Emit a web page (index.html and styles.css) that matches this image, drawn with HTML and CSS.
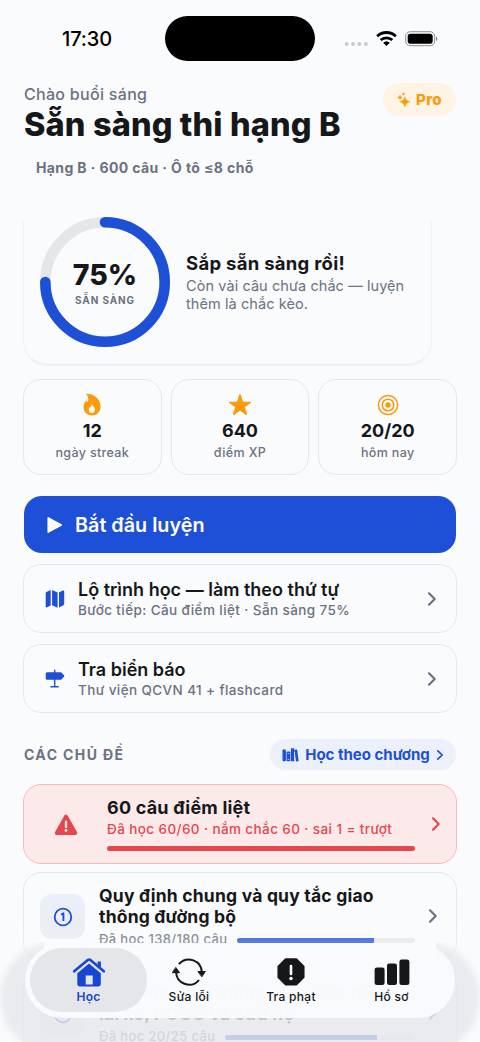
FILE: index.html
```html
<!DOCTYPE html>
<html lang="vi">
<head>
<meta charset="utf-8">
<meta name="viewport" content="width=device-width, initial-scale=1">
<title>Sẵn sàng thi hạng B</title>
<link rel="stylesheet" href="styles.css">
</head>
<body>
<div class="phone">
  <div class="status">
    <span class="time">17:30</span>
    <span class="island"></span>
    <span class="signals">
      <svg width="96" height="20" viewBox="0 0 96 20">
        <g fill="#c9cacd"><circle cx="2.700" cy="15" r="2"/><circle cx="9" cy="15" r="2"/><circle cx="15.400" cy="15" r="2"/><circle cx="21.800" cy="15" r="2"/></g>
        <g fill="none" stroke="#000" stroke-width="2.8"><path d="M33.2 7.2a13.5 13.5 0 0 1 18.6 0"/><path d="M36.7 11.1a8.4 8.4 0 0 1 11.6 0"/></g>
        <path d="M39.2 13.7a4.9 4.9 0 0 1 6.6 0L42.5 17z"/>
        <rect x="61.7" y="2.7" width="29" height="14" rx="4.6" fill="none" stroke="#8d8e90"/>
        <rect x="63.7" y="4.7" width="25" height="10" rx="2.8"/>
        <path d="M92 7.5q3 2.2 0 4.6z" fill="#8d8e90"/>
      </svg>
    </span>
  </div>

  <header class="header">
    <div>
      <div class="greeting">Chào buổi sáng</div>
      <h1 class="title">Sẵn sàng thi hạng B</h1>
    </div>
    <span class="pro">
      <svg width="14" height="16" viewBox="0 0 14 16" fill="#f99b0b"><path d="M7.8 4.6Q8.5 9 13.2 9.8 8.5 10.6 7.8 15.3 7.1 10.6 2.6 9.8 7.1 9 7.8 4.6z" stroke="#f99b0b" stroke-width=".3"/><path d="M3 3.1Q3.3 5.1 5.3 5.4 3.3 5.8 3 7.8 2.6 5.8.5 5.4 2.6 5.1 3 3.1z" stroke="#f99b0b" stroke-width=".3"/><path d="M6.4.4q.2 1.4 1.6 1.6-1.4.2-1.6 1.6Q6.200 2.200 4.800 2 6.200 1.800 6.400.4z" stroke="#f99b0b" stroke-width=".3"/></svg>
      <span>Pro</span>
    </span>
  </header>
  <div class="license">Hạng B · 600 câu · Ô tô ≤8 chỗ</div>

  <section class="hero">
    <div class="ring">
      <svg class="ring-art" width="132" height="132" viewBox="0 0 132 132" fill="none" stroke-width="10.6">
        <circle cx="66" cy="66" r="59.7" stroke="#e5e6ea"/>
        <path d="M66 6.300A59.700 59.700 0 1 1 6.300 66" stroke="#1d4fd7" stroke-linecap="round"/>
      </svg>
      <div class="ring-label"><b class="percent">75%</b><span class="ready">SẴN SÀNG</span></div>
    </div>
    <div class="hero-copy">
      <h2 class="hero-title">Sắp sẵn sàng rồi!</h2>
      <p class="hero-text">Còn vài câu chưa chắc — luyện<br>thêm là chắc kèo.</p>
    </div>
  </section>

  <section class="stats">
    <div class="stat">
      <svg width="24" height="24" viewBox="0 0 24 24"><path d="M6 .8C14 .3 20.600 6.200 20.600 13.600c0 5.200-3.200 8.800-8.500 8.800-5 0-8.500-3.400-8.500-8.200 0-3 1.300-5 2.500-6.700l1.700 1.700C8.900 6.400 8.400 3.300 6 .8z" fill="#f99b0b"/><path d="M11.200 10.300c.5 2 3.700 3.500 3.700 6.500 0 1.900-1.200 3.100-3 3.100-1.900 0-3.100-1.200-3.100-3 0-1.500.6-2.400 1.200-3.200l.8.900c.6-1.200.9-2.600.4-4.300z" fill="#fafbfd"/></svg>
      <b class="stat-value">12</b><span class="stat-name">ngày streak</span>
    </div>
    <div class="stat">
      <svg width="24" height="24" viewBox="0 0 24 24"><path d="M12 1.800l2.600 7.300 7.800.2-6.200 4.700 2.200 7.400L12 17l-6.400 4.400L7.800 14 1.600 9.300l7.800-.2z" fill="#f99b0b" stroke="#f99b0b" stroke-width="1.300" stroke-linejoin="round"/></svg>
      <b class="stat-value">640</b><span class="stat-name">điểm XP</span>
    </div>
    <div class="stat">
      <svg width="24" height="24" viewBox="0 0 24 24" fill="none" stroke="#f99b0b" stroke-width="1.500"><circle cx="12" cy="12" r="9.600"/><circle cx="12" cy="12" r="5.800"/><circle cx="12" cy="12" r="2.700" fill="#f99b0b" stroke="none"/></svg>
      <b class="stat-value">20/20</b><span class="stat-name">hôm nay</span>
    </div>
  </section>

  <button class="cta">
    <svg width="16" height="18" viewBox="0 0 16 18"><path d="M1.200 1.800v14.400L14.300 9z" fill="#fff" stroke="#fff" stroke-width="1.500" stroke-linejoin="round"/></svg>
    <span>Bắt đầu luyện</span>
  </button>

  <div class="link-card">
    <svg width="20" height="20" viewBox="0 0 20 20" fill="#1d4fd7"><path d="M.7 4.200Q.7 3.400 1.400 3L5.700.9v15.500L2 18.300q-1.300.6-1.300-.7zM7.100.9l5.500 2.600v15.200l-5.500-2.500zM14 3.500 17.700 1.600q1.500-.6 1.500.8v12.700q0 .8-.8 1.200L14 18.500z"/></svg>
    <div class="link-copy"><h3 class="link-title">Lộ trình học — làm theo thứ tự</h3><p class="link-text">Bước tiếp: Câu điểm liệt · Sẵn sàng 75%</p></div>
    <svg class="chevron" width="10" height="16" viewBox="0 0 10 16"><path d="M2 2.300 7.700 8 2 13.700"/></svg>
  </div>
  <div class="link-card">
    <svg width="20" height="20" viewBox="0 0 20 20" fill="#1d4fd7"><path d="M9 1.200q0-.8.7-.8t.7.800v2.100h5q.8 0 1.300.5l2.300 2.500q.6.700 0 1.400l-2.300 2.500q-.5.500-1.300.5h-5v6.400h2.700q.8 0 .8.700t-.8.700H6q-.8 0-.8-.7t.8-.7h3v-6.400H2.200q-1.500 0-1.500-1.500V4.800q0-1.500 1.500-1.500H9z"/></svg>
    <div class="link-copy"><h3 class="link-title">Tra biển báo</h3><p class="link-text">Thư viện QCVN 41 + flashcard</p></div>
    <svg class="chevron" width="10" height="16" viewBox="0 0 10 16"><path d="M2 2.300 7.700 8 2 13.700"/></svg>
  </div>

  <div class="topics-head">
    <h2 class="topics-title">CÁC CHỦ ĐỀ</h2>
    <span class="chapters">
      <svg width="17" height="14" viewBox="0 0 17 14"><rect x=".5" y="1.500" width="3.400" height="11.800" rx=".7" fill="#1d4fd7"/><rect x="4.500" y="3.500" width="3.800" height="9.800" rx=".7" fill="#1d4fd7"/><path d="M8.900.8q0-.6.6-.6h2.200q.6 0 .6.600v12.500H8.900z" fill="#1d4fd7"/><path d="m12.300 2 2.200-.4q.6-.1.700.5l1.400 10.400q.1.600-.5.700l-2.100.2z" fill="#1d4fd7"/><path d="M5.600 5.500h1.600M5.600 11.400h1.600M12.600 4v8" stroke="#ebf0fb" stroke-width=".7"/></svg>
      <span>Học theo chương</span>
      <svg width="8" height="12" viewBox="0 0 8 12"><path d="M1.800 1.800 6.200 6l-4.400 4.200" fill="none" stroke="#1d4fd7" stroke-width="1.700" stroke-linecap="round" stroke-linejoin="round"/></svg>
    </span>
  </div>

  <article class="critical">
    <svg class="warning" width="24" height="22" viewBox="0 0 24 22"><path d="M12 2.700 21.200 19H2.800z" fill="#e5474d" stroke="#e5474d" stroke-width="4" stroke-linejoin="round"/><path d="M12 7.700v5.500" stroke="#fceaeb" stroke-width="2.300" stroke-linecap="round"/><circle cx="12" cy="16.500" r="1.400" fill="#fceaeb"/></svg>
    <div class="critical-copy"><h3 class="topic-title large">60 câu điểm liệt</h3><p class="critical-text">Đã học 60/60 · nắm chắc 60 · sai 1 = trượt</p><div class="critical-bar"></div></div>
    <svg class="chevron danger" width="10" height="16" viewBox="0 0 10 16"><path d="M2 2.300 7.700 8 2 13.700"/></svg>
  </article>

  <article class="topic">
    <span class="badge"><svg width="20" height="20" viewBox="0 0 20 20" fill="none" stroke="#1d4fd7" stroke-width="1.800"><circle cx="10" cy="10" r="8.300"/><path d="M8.100 7.700 10.400 6.200V14" stroke-width="1.900" stroke-linejoin="round"/></svg></span>
    <div class="topic-copy"><h3 class="topic-title">Quy định chung và quy tắc giao<br>thông đường bộ</h3><div class="progress"><span>Đã học 138/180 câu</span><i class="track"><i class="fill" style="width:77%"></i></i></div></div>
    <svg class="chevron" width="10" height="16" viewBox="0 0 10 16"><path d="M2 2.300 7.700 8 2 13.700"/></svg>
  </article>
  <article class="topic">
    <span class="badge"><svg width="20" height="20" viewBox="0 0 20 20" fill="none" stroke="#1d4fd7" stroke-width="1.800"><circle cx="10" cy="10" r="8.300"/><path d="M7.400 7.400q2.600-2.500 4.600-.5 1.200 1.500-4.600 6.300h5.500" stroke-width="1.700"/></svg></span>
    <div class="topic-copy"><h3 class="topic-title">Văn hóa giao thông, đạo đức người<br>lái xe, PCCC và cứu hộ</h3><div class="progress"><span>Đã học 20/25 câu</span><i class="track"><i class="fill" style="width:80%"></i></i></div></div>
    <svg class="chevron" width="10" height="16" viewBox="0 0 10 16"><path d="M2 2.300 7.700 8 2 13.700"/></svg>
  </article>

  <div class="fade"></div>
  <div class="tabs-shadow"></div>
  <nav class="tabs">
    <div class="tab active">
      <svg width="34" height="30" viewBox="0 0 34 30"><path d="M17 6.500 28.800 16.200V26.800q0 2.700-2.700 2.700H8q-2.700 0-2.700-2.700V16.200z" fill="#1746d2"/><path d="M2.200 14.300 15.800 3q1.300-1 2.600 0L31.800 14.300" fill="none" stroke="#e5e6ea" stroke-width="5"/><path d="M25.500 4.500h3.400v7.200L25.500 9z" fill="#1746d2"/><path d="M2.200 14.300 15.800 3q1.300-1 2.600 0L31.800 14.300" fill="none" stroke="#1746d2" stroke-width="2.600" stroke-linecap="round" stroke-linejoin="round"/><rect x="13.700" y="18.500" width="7" height="9" fill="#e5e6ea"/></svg>
      <span>Học</span>
    </div>
    <div class="tab">
      <svg width="34" height="30" viewBox="0 0 34 30" fill="none" stroke="#161719" stroke-width="2" stroke-linecap="round"><path d="M7.500 6.500A13 13 0 0 1 29.800 15M26.500 23.600A13 13 0 0 1 4.100 15"/><path d="M26.300 14.500h7L30 19.500zM.6 15.700h7L4 10.700z" fill="#161719" stroke-width="1" stroke-linejoin="round"/></svg>
      <span>Sửa lỗi</span>
    </div>
    <div class="tab">
      <svg width="34" height="30" viewBox="0 0 34 30"><path d="M11.600 2.500h10.800l7 7v10.800l-7 7H11.600l-7-7V9.500z" fill="#161719" stroke="#161719" stroke-width="2.300" stroke-linejoin="round"/><path d="M17 9v8" stroke="#fff" stroke-width="2.600" stroke-linecap="round"/><circle cx="17" cy="21.500" r="1.700" fill="#fff"/></svg>
      <span>Tra phạt</span>
    </div>
    <div class="tab">
      <svg width="36" height="30" viewBox="0 0 36 30" fill="#161719"><rect x=".6" y="10.500" width="10" height="17.500" rx="2.300"/><rect x="13" y="6.500" width="10" height="21.500" rx="2.300"/><rect x="25.400" y="2.500" width="10" height="25.500" rx="2.300"/></svg>
      <span>Hồ sơ</span>
    </div>
  </nav>
</div>
</body>
</html>
```

FILE: styles.css
```css
* { box-sizing: border-box; }
body, h1, h2, h3, p { margin: 0; }
body { background: #fafbfd; color: #161719; font-family: Inter, "Noto Sans", sans-serif; }
svg { display: block; flex: none; }

.phone { position: relative; width: 480px; height: 1042px; overflow: hidden; padding: 0 24px; background: #fafbfd; }

.status { height: 84px; padding-top: 16px; display: grid; grid-template-columns: 141px 150px 1fr; align-items: start; }
.time { padding: 11px 0 0 38px; font-size: 20px; line-height: 24px; font-weight: 500; color: #000; letter-spacing: -.1px; }
.island { height: 45px; border-radius: 23px; background: #000; }
.signals { padding: 13px 0 0 29px; }

.header { height: 66px; display: flex; justify-content: space-between; align-items: flex-start; }
.greeting { height: 20px; font-size: 16px; line-height: 20px; font-weight: 500; letter-spacing: .3px; color: #6b7280; }
.title { font-size: 32.500px; line-height: 42px; font-weight: 800; letter-spacing: .14px; white-space: nowrap; }
.pro { width: 73px; height: 33px; margin-top: -1px; border-radius: 17px; background: #fff3e3; color: #f99b0b; display: flex; align-items: center; justify-content: center; gap: 5px; font-size: 15px; font-weight: 800; letter-spacing: .3px; }
.license { height: 49px; padding: 8px 12px; font-size: 14px; line-height: 20px; font-weight: 700; letter-spacing: .38px; color: #6b7280; white-space: nowrap; }

.hero { position: relative; width: 409px; height: 166px; margin-left: -1px; padding-left: 16px; display: flex; align-items: center; gap: 15px; }
.hero::before { content: ""; position: absolute; inset: 0; border: 1px solid #f0f2f9; border-bottom-color: #e8ebf4; border-radius: 24px; box-shadow: 0 2px 2px -1px #eff2fb; clip-path: inset(22px -5px -8px -5px); }
.ring { position: relative; width: 132px; height: 132px; }
.ring-label { position: absolute; inset: 0; display: flex; flex-direction: column; align-items: center; padding-top: 42px; }
.percent { font-size: 28.500px; line-height: 34px; font-weight: 800; }
.ready { margin-top: 1px; font-size: 10px; line-height: 14px; font-weight: 700; letter-spacing: .9px; color: #6b7280; }
.hero-copy { white-space: nowrap; }
.hero-title { font-size: 18.500px; line-height: 24px; font-weight: 700; letter-spacing: .28px; }
.hero-text { margin-top: 2px; font-size: 14.500px; line-height: 18.500px; letter-spacing: .08px; color: #6b7280; }

.stats { height: 96px; margin: 14px -1px 0; display: grid; grid-template-columns: repeat(3, 1fr); gap: 9px; }
.stat { border: 1px solid #e5e7ed; border-radius: 18px; display: flex; flex-direction: column; align-items: center; padding-top: 13px; }
.stat-value { margin-top: 1px; font-size: 18px; line-height: 26px; font-weight: 700; }
.stat-name { font-size: 12.500px; line-height: 18px; font-weight: 500; letter-spacing: .35px; color: #6b7280; }

.cta { width: 432px; height: 57px; margin: 21px 0 11px; padding: 0 23px; border: 0; border-radius: 18px; background: #1d4fd7; color: #fff; display: flex; align-items: center; gap: 12px; font: 600 19.800px/24px Inter, "Noto Sans", sans-serif; }

.link-card { height: 69px; margin: 0 -1px 11px; padding: 0 19px 0 21px; border: 1px solid #e5e7ed; border-radius: 18px; display: flex; align-items: center; gap: 13px; }
.link-copy { flex: 1; white-space: nowrap; }
.link-title { font-size: 18px; line-height: 22px; font-weight: 600; }
.link-text { font-size: 13.500px; line-height: 18px; letter-spacing: .4px; font-weight: 500; color: #6b7280; }
.chevron { fill: none; stroke: #6b7280; stroke-width: 2.200; stroke-linecap: round; stroke-linejoin: round; }
.danger { stroke: #e5474d; }

.topics-head { height: 31px; margin: 26px 0 14px; display: flex; align-items: center; justify-content: space-between; }
.topics-title { font-size: 14px; font-weight: 700; letter-spacing: 1.400px; color: #6b7280; }
.chapters { width: 186px; height: 31px; border-radius: 16px; background: #ebf0fb; color: #1d4fd7; display: flex; align-items: center; justify-content: center; gap: 6px; font-size: 15px; font-weight: 700; white-space: nowrap; }

.critical { height: 80px; margin: 0 -1px 8px; padding: 12px 15px 0 30px; border: 1px solid #f5babc; border-radius: 18px; background: #fceaeb; display: flex; gap: 29px; }
.warning { margin-top: 17px; }
.critical-copy { width: 308px; white-space: nowrap; }
.critical-text { margin-top: 1px; font-size: 13.500px; line-height: 20px; font-weight: 500; letter-spacing: .4px; color: #e5474d; }
.critical-bar { height: 5px; margin-top: 7px; border-radius: 3px; background: #e5474d; }
.critical .chevron { margin: 19px 0 0 -13px; }

.topic { height: 89px; margin: 0 -1px 8px; padding: 12px 15px 0 16px; border: 1px solid #e5e7ed; border-radius: 18px; display: flex; gap: 14px; }
.topic-title { font-size: 17.500px; line-height: 21px; font-weight: 700; letter-spacing: .2px; white-space: nowrap; }
.large { font-size: 18px; }
.badge { width: 45px; height: 45px; margin-top: 9px; border-radius: 12px; background: linear-gradient(#ebf0fb, #e9ebf1); display: grid; place-items: center; flex: none; }
.topic-copy { width: 316px; }
.progress { margin-top: 2px; display: flex; align-items: center; gap: 10px; font-size: 13px; line-height: 20px; font-weight: 500; letter-spacing: .37px; color: #6b7280; white-space: nowrap; }
.track { flex: 1; height: 5px; margin-top: 2px; border-radius: 3px; background: #e5e6ea; overflow: hidden; }
.fill { display: block; height: 100%; background: #1d4fd7; }
.topic .chevron { margin: 23px 0 0 -1px; }

/* Floating tab bar with the content dissolving underneath it */
.fade { position: absolute; left: 0; right: 0; top: 920px; bottom: 0; background: linear-gradient(rgba(250,251,253,0), rgba(250,251,253,.3) 20%); }
.tabs-shadow { position: absolute; left: 0; right: 0; top: 942px; height: 112px; border-radius: 56px; background: rgba(229,230,234,.76); filter: blur(3px); clip-path: polygon(-10px 0, 44px 0, 44px 20px, 436px 20px, 436px 0, 490px 0, 490px 112px, -10px 112px); }
.tabs { position: absolute; left: 25px; top: 943px; width: 430px; height: 75px; border-radius: 38px; padding: 5px 5px 6px; display: grid; grid-template-columns: 117px 84px 120px 81px; background: rgba(250,251,253,.95); }
.tab { display: flex; flex-direction: column; align-items: center; padding-top: 9px; font-size: 12px; line-height: 16px; font-weight: 500; letter-spacing: .3px; white-space: nowrap; }
.tab span { margin-top: 2px; }
.active { height: 64px; border-radius: 32px; background: #e5e6ea; color: #1746d2; font-weight: 600; }
```
